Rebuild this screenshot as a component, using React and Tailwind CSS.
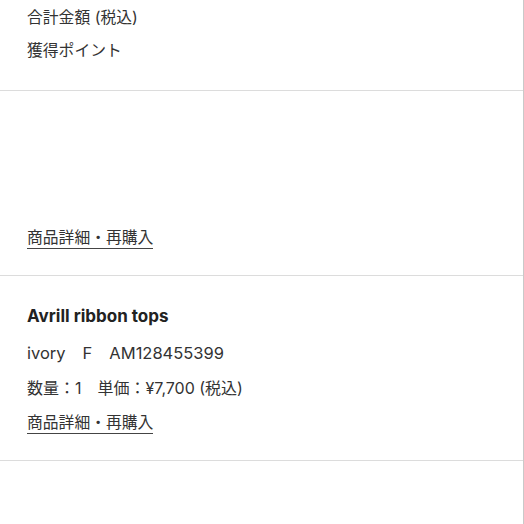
import React from 'react';

const font = { fontFamily: 'Inter, "Noto Sans CJK JP", "Noto Sans", sans-serif' };

const items = [
    { name: null },
    { name: 'Avrill ribbon tops', color: 'ivory', size: 'F', code: 'AM128455399', qty: 1, price: '¥7,700' },
];

const DetailLink = () => (
    <div className="pl-[27px]">
        <span className="inline-block leading-[20px] text-[15.8px] text-[#333] border-b-[1.5px] border-[#444]">
            商品詳細・再購入
        </span>
    </div>
);

const App = () => {
    return (
        <div className="w-[524px] h-[524px] bg-white overflow-hidden border-r border-[#c9c9c9]" style={font}>
            {/* Summary */}
            <div className="pl-[27px] pt-[1px] pb-[23px] text-[15.8px] text-[#333] border-b border-[#dcdcdc]">
                <div className="leading-[33px]">合計金額 (税込)</div>
                <div className="leading-[33px]">獲得ポイント</div>
            </div>

            {/* Order items */}
            {items.map((item, i) => (
                <div key={i} className="pb-[26px] border-b border-[#dcdcdc]">
                    {item.name ? (
                        <div className="pt-[22px] pl-[27px] text-[#333]">
                            <div className="leading-[37px] text-[17px] font-bold text-[#222]">{item.name}</div>
                            <div className="leading-[36px] text-[16.5px] flex gap-[17px]">
                                <span>{item.color}</span>
                                <span>{item.size}</span>
                                <span>{item.code}</span>
                            </div>
                            <div className="leading-[34px] text-[16px] flex gap-[16px]">
                                <span>数量：{item.qty}</span>
                                <span>単価：{item.price} (税込)</span>
                            </div>
                        </div>
                    ) : (
                        <div className="h-[134px]" />
                    )}
                    <div className={item.name ? 'pt-[5px]' : ''}>
                        <DetailLink />
                    </div>
                </div>
            ))}
        </div>
    );
};

export default App;
